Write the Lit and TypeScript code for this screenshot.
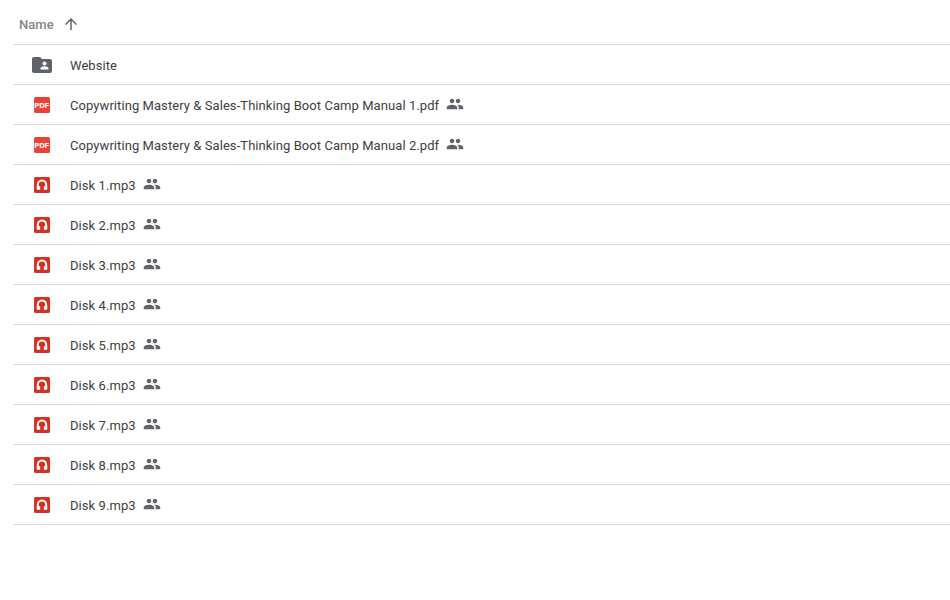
import { LitElement, html, css, svg } from "lit";
import { customElement } from "lit/decorators.js";

type Kind = "folder" | "pdf" | "audio";
interface Item { name: string; kind: Kind; shared: boolean; }

const items: Item[] = [
  { name: "Website", kind: "folder", shared: false },
  { name: "Copywriting Mastery & Sales-Thinking Boot Camp Manual 1.pdf", kind: "pdf", shared: true },
  { name: "Copywriting Mastery & Sales-Thinking Boot Camp Manual 2.pdf", kind: "pdf", shared: true },
  ...[1, 2, 3, 4, 5, 6, 7, 8, 9].map((n) => ({ name: `Disk ${n}.mp3`, kind: "audio" as Kind, shared: true })),
];

const icons: Record<Kind, unknown> = {
  folder: svg`<svg class="ico" width="20" height="20" viewBox="0 0 20 20">
    <path fill="#5f6368" d="M8 2H2C.9 2 0 2.900 0 4v12c0 1.100.9 2 2 2h16c1.100 0 2-.9 2-2V6c0-1.100-.9-2-2-2h-8L8 2z"/>
    <circle cx="12.500" cy="8.600" r="2" fill="#fff"/>
    <path fill="#fff" d="M8.500 14.500v-1c0-1.400 2.600-2.200 4-2.200s4 .8 4 2.200v1h-8z"/>
  </svg>`,
  pdf: svg`<svg class="ico" width="20" height="20" viewBox="0 0 20 20">
    <rect x="2" y="2" width="16" height="16" rx="1.500" fill="#ea4335"/>
    <text x="10" y="12.600" text-anchor="middle" class="pdf">PDF</text>
  </svg>`,
  audio: svg`<svg class="ico" width="20" height="20" viewBox="0 0 20 20">
    <rect x="2" y="2" width="16" height="16" rx="1.500" fill="#d93025"/>
    <path fill="none" stroke="#fff" stroke-width="2" d="M5.800 13V9.700a4.200 4.200 0 0 1 8.400 0V13"/>
    <rect x="4.800" y="11.300" width="3.400" height="3.500" rx=".5" fill="#fff"/>
    <rect x="11.800" y="11.300" width="3.400" height="3.500" rx=".5" fill="#fff"/>
  </svg>`,
};

const people = svg`<svg class="people" width="18" height="18" viewBox="0 0 24 24">
  <path fill="#5f6368" d="M16 11c1.660 0 2.990-1.340 2.990-3S17.660 5 16 5s-3 1.340-3 3 1.340 3 3 3zm-8 0c1.660 0 2.990-1.340 2.990-3S9.660 5 8 5 5 6.340 5 8s1.340 3 3 3zm0 2c-2.330 0-7 1.170-7 3.500V19h14v-2.500C15 14.170 10.330 13 8 13zm8 0c-.29 0-.62.020-.97.050C16.190 13.890 17 15.020 17 16.500V19h6v-2.500c0-2.330-4.670-3.500-7-3.500z"/>
</svg>`;

@customElement("app-root")
export class AppRoot extends LitElement {
  static styles = css`
    :host {
      display: block;
      width: 950px;
      height: 600px;
      background: #fff;
      font-family: Roboto, "Liberation Sans", sans-serif;
      letter-spacing: 0.07px;
      overflow: hidden;
    }
    .list {
      margin-left: 13px;
      display: flex;
      flex-direction: column;
    }
    .head {
      height: 45px;
      box-sizing: border-box;
      padding: 4px 0 0 6px;
      display: flex;
      align-items: center;
      gap: 8px;
      border-bottom: 1px solid #dadce0;
      color: #80868b;
      font-size: 13px;
      font-weight: 500;
    }
    .arrow { display: block; }
    .row {
      height: 40px;
      box-sizing: border-box;
      padding: 1px 0 0 19px;
      display: flex;
      align-items: center;
      border-bottom: 1px solid #dadce0;
      color: #3c4043;
      font-size: 13px;
    }
    .ico { display: block; flex: none; }
    .pdf {
      font-family: "Liberation Sans", sans-serif;
      font-size: 7px;
      font-weight: 700;
      letter-spacing: 0.3px;
      fill: #fff;
      stroke: #fff;
      stroke-width: 0.2px;
    }
    .name { margin-left: 18px; white-space: nowrap; }
    .people { display: block; flex: none; margin: 0 0 3px 7px; }
  `;

  render() {
    return html`<div class="list">
      <div class="head">
        <span>Name</span>
        <svg class="arrow" width="18" height="18" viewBox="0 0 24 24">
          <path fill="#5f6368" d="M4 12l1.410 1.410L11 7.830V20h2V7.830l5.580 5.590L20 12l-8-8-8 8z"/>
        </svg>
      </div>
      ${items.map(
        (it) => html`<div class="row">
          ${icons[it.kind]}
          <span class="name">${it.name}</span>
          ${it.shared ? people : ""}
        </div>`
      )}
    </div>`;
  }
}
